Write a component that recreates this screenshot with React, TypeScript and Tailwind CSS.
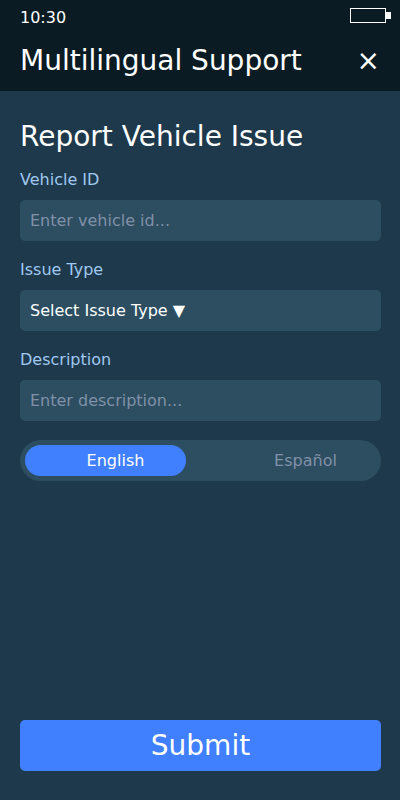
import { useState } from "react";

const fieldClass =
  "block h-[41px] w-full appearance-none rounded-[5px] border-0 bg-[#2c4e60] px-[10px] text-base text-white outline-none placeholder:text-[#8090a8] placeholder:opacity-100";
const labelClass = "mb-[10px] block text-base leading-5 text-[#a0c8f0]";

const languages = ["English", "Español"];

function StatusBar() {
  return (
    <div className="flex h-9 items-start justify-between pt-2 pr-[9px] pl-5">
      <span className="text-base leading-5">10:30</span>
      <div className="flex items-center">
        <div className="h-[15px] w-9 border border-white" />
        <div className="h-[7px] w-[5px] bg-white" />
      </div>
    </div>
  );
}

function LanguageToggle() {
  const [language, setLanguage] = useState("English");
  return (
    <fieldset className="grid grid-cols-2 gap-[29px] rounded-full bg-[#2c4e60] p-[5px]">
      {languages.map((name) => (
        <label
          key={name}
          className={
            "relative flex h-[31px] cursor-pointer items-center justify-center rounded-full pl-5 text-base leading-5 " +
            (name === language ? "bg-[#4080ff] text-white" : "text-[#8090a8]")
          }
        >
          <input
            type="radio"
            name="language"
            className="sr-only"
            checked={name === language}
            onChange={() => setLanguage(name)}
          />
          {name}
        </label>
      ))}
    </fieldset>
  );
}

export default function App() {
  return (
    <div className="flex min-h-screen flex-col bg-[#1e394b] font-['DejaVu_Sans',sans-serif] text-white">
      <header className="bg-[#0a1b24]">
        <StatusBar />
        <div className="flex h-[55px] items-start justify-between px-5 pt-[9px]">
          <h1 className="text-[28px] leading-8 whitespace-nowrap">Multilingual Support</h1>
          <button type="button" aria-label="Close" className="text-[28px] leading-8">
            ×
          </button>
        </div>
      </header>
      <form
        className="flex flex-1 flex-col pt-[30px] pr-[19px] pb-[29px] pl-5"
        onSubmit={(event) => event.preventDefault()}
      >
        <h2 className="mb-[17px] text-[28px] leading-8">Report Vehicle Issue</h2>
        <div className="mb-[19px]">
          <label htmlFor="vehicle" className={labelClass}>
            Vehicle ID
          </label>
          <input id="vehicle" type="text" placeholder="Enter vehicle id..." className={fieldClass} />
        </div>
        <div className="mb-[19px]">
          <label htmlFor="issue" className={labelClass}>
            Issue Type
          </label>
          <select id="issue" className={fieldClass}>
            <option>Select Issue Type ▼</option>
          </select>
        </div>
        <div className="mb-[19px]">
          <label htmlFor="description" className={labelClass}>
            Description
          </label>
          <input id="description" type="text" placeholder="Enter description..." className={fieldClass} />
        </div>
        <LanguageToggle />
        <button type="submit" className="mt-auto h-[51px] rounded-[5px] bg-[#4080ff] text-[28px] leading-8">
          Submit
        </button>
      </form>
    </div>
  );
}
